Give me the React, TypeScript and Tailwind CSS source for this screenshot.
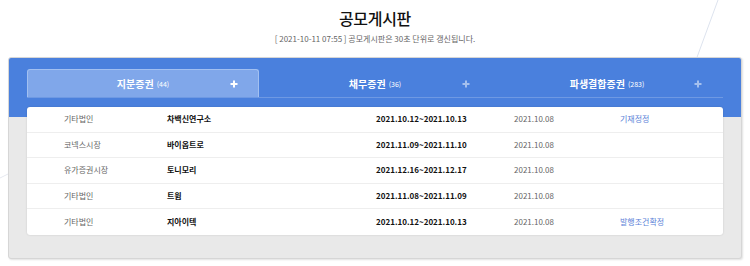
import React from 'react';

const tabs = [
  { name: '지분증권', count: 44, active: true },
  { name: '채무증권', count: 36, active: false },
  { name: '파생결합증권', count: 283, active: false },
];

const rows = [
  { market: '기타법인', company: '차백신연구소', period: '2021.10.12~2021.10.13', date: '2021.10.08', note: '기재정정' },
  { market: '코넥스시장', company: '바이옵트로', period: '2021.11.09~2021.11.10', date: '2021.10.08', note: '' },
  { market: '유가증권시장', company: '토니모리', period: '2021.12.16~2021.12.17', date: '2021.10.08', note: '' },
  { market: '기타법인', company: '트윔', period: '2021.11.08~2021.11.09', date: '2021.10.08', note: '' },
  { market: '기타법인', company: '지아이텍', period: '2021.10.12~2021.10.13', date: '2021.10.08', note: '발행조건확정' },
];

function Plus({ active }: { active: boolean }) {
  return (
    <svg width="8" height="8" viewBox="0 0 8 8" className={active ? 'text-white' : 'text-white/50'}>
      <path d="M4 0.5v7M0.5 4h7" stroke="currentColor" strokeWidth="2" />
    </svg>
  );
}

export default function App() {
  return (
    <div className="relative w-[750px] h-[266px] overflow-hidden bg-white font-['Noto_Sans_CJK_KR','Noto_Sans',sans-serif]">
      {/* faint background strokes */}
      <svg className="absolute inset-0 pointer-events-none" width="750" height="266">
        <line x1="718" y1="0" x2="696" y2="60" stroke="#dde3ee" strokeWidth="1" />
        <line x1="0" y1="178" x2="24" y2="166" stroke="#e6e9f0" strokeWidth="1" />
      </svg>

      <div className="relative text-center pt-[7px]">
        <h1 className="text-[16px] leading-[22px] font-medium text-[#111] tracking-[-0.3px]">공모게시판</h1>
        <p className="mt-[4px] text-[8px] leading-[12px] text-[#666]">
          [ 2021-10-11 07:55 ] 공모게시판은 30초 단위로 갱신됩니다.
        </p>
      </div>

      <div className="relative mx-[8px] mt-[12px] rounded-[3px] border border-[#d6d6d6] bg-[#e9e9e9] shadow-[1px_1px_2px_rgba(0,0,0,0.12)] overflow-hidden">
        <div className="bg-[#4a80dd] px-[18px] pt-[11px] pb-[19px]">
          <div className="grid grid-cols-3 border-b border-white/20">
            {tabs.map(tab => (
              <div
                key={tab.name}
                className={`grid grid-cols-[48px_1fr_48px] items-center h-[28px] rounded-t-[3px] border border-b-0 ${
                  tab.active ? 'bg-[#80a7ea] border-[#a2c0f1]' : 'border-transparent'
                }`}
              >
                <span />
                <span className="flex items-center justify-center gap-[3px] text-white leading-none">
                  <span className="text-[10px] font-bold">{tab.name}</span>
                  <span className="text-[7px] pt-[1px]">({tab.count})</span>
                </span>
                <span className="flex justify-center">
                  <Plus active={tab.active} />
                </span>
              </div>
            ))}
          </div>
        </div>

        <div className="mx-[18px] -mt-[10px] mb-[23px] rounded-[3px] bg-white shadow-[0_0_2px_rgba(0,0,0,0.15)]">
          {rows.map((row, i) => (
            <div
              key={i}
              className={`grid grid-cols-[103px_209px_138px_106px_1fr] items-center h-[25.6px] pl-[37px] text-[8px] ${
                i < rows.length - 1 ? 'border-b border-[#eeeeee]' : ''
              }`}
            >
              <span className="text-[#666]">{row.market}</span>
              <span className="font-bold text-[#111]">{row.company}</span>
              <span className="font-bold text-[#111]">{row.period}</span>
              <span className="text-[#666]">{row.date}</span>
              <span className="text-[#5a7fd8]">{row.note}</span>
            </div>
          ))}
        </div>
      </div>
    </div>
  );
}
